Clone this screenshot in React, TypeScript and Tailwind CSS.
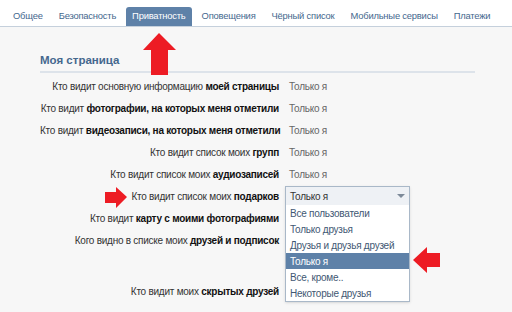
const tabs = ['Общее', 'Безопасность', 'Приватность', 'Оповещения', 'Чёрный список', 'Мобильные сервисы', 'Платежи'];

const rows: { pre: string; bold: string; value?: string; extra?: string }[] = [
  { pre: 'Кто видит основную информацию', bold: 'моей страницы', value: 'Только я' },
  { pre: 'Кто видит', bold: 'фотографии, на которых меня отметили', value: 'Только я' },
  { pre: 'Кто видит', bold: 'видеозаписи, на которых меня отметили', value: 'Только я' },
  { pre: 'Кто видит список моих', bold: 'групп', value: 'Только я' },
  { pre: 'Кто видит список моих', bold: 'аудиозаписей', value: 'Только я' },
  { pre: 'Кто видит список моих', bold: 'подарков' },
  { pre: 'Кто видит', bold: 'карту с моими фотографиями' },
  { pre: 'Кого видно в списке моих', bold: 'друзей и подписок', extra: 'mb-[29px]' },
  { pre: 'Кто видит моих', bold: 'скрытых друзей' },
];

const options = ['Все пользователи', 'Только друзья', 'Друзья и друзья друзей', 'Только я', 'Все, кроме..', 'Некоторые друзья'];

function RedArrow({ dir, className }: { dir: 'up' | 'right' | 'left'; className: string }) {
  const pts =
    dir === 'up'
      ? '16,0 33,17 25,17 25,42 8,42 8,17 0,17'
      : dir === 'right'
        ? '22,10 11,0 11,5 0,5 0,16 11,16 11,21'
        : '0,13 14,0 14,6 27,6 27,20 14,20 14,26';
  const [w, h] = dir === 'up' ? [33, 42] : dir === 'right' ? [22, 21] : [27, 26];
  return (
    <svg width={w} height={h} viewBox={`0 0 ${w} ${h}`} className={className}>
      <polygon points={pts} fill="#ed1c24" />
    </svg>
  );
}

export default function App() {
  return (
    <div className="relative w-[512px] h-[312px] overflow-hidden bg-[#f7f7f7] text-[10px] tracking-[-0.25px] font-['Liberation_Sans',Arial,sans-serif] whitespace-nowrap">
      {/* Tabs */}
      <div className="flex items-end h-[27px] bg-white border-b border-[#c5d0dc] pl-[5px] text-[9.4px] tracking-[-0.2px]">
        {tabs.map((t) => {
          const active = t === 'Приватность';
          return (
            <div
              key={t}
              className={`h-[19px] px-[6px] mx-[2px] flex items-center rounded-t-[3px] ${
                active ? 'bg-[#5e81a8] text-white' : 'text-[#45688e]'
              }`}
            >
              {t}
            </div>
          );
        })}
      </div>

      {/* Content */}
      <div className="px-[40px] pt-[25px]">
        <div className="text-[11.5px] tracking-normal font-bold text-[#45688e] pb-[2px] border-b-2 border-[#dde3ea] w-[435px]">
          Моя страница
        </div>

        <div className="flex flex-col gap-[8px] mt-[6px]">
          {rows.map((r, i) => (
            <div key={i} className={`flex items-center h-[14px] ${r.extra ?? ''}`}>
              <div className="w-[239px] text-right text-[#333]">
                {r.pre} <b className="text-[#111]">{r.bold}</b>
              </div>
              <div className="ml-[10px] text-[#666] relative">
                {r.value}
                {i === 5 && (
                  <div className="absolute left-[-4px] top-[-10px] w-[125px] bg-white border border-[#a9b8c8] shadow-sm text-[#333]">
                    <div className="h-[18px] flex items-center justify-between px-[4px] bg-[#eef1f5]">
                      <span>Только я</span>
                      <svg width="8" height="4" viewBox="0 0 8 4">
                        <polygon points="0,0 8,0 4,4" fill="#7d8a99" />
                      </svg>
                    </div>
                    {options.map((o) => (
                      <div
                        key={o}
                        className={`h-[16px] flex items-center px-[4px] ${
                          o === 'Только я' ? 'bg-[#5e81a8] text-white' : 'text-[#3f5873]'
                        }`}
                      >
                        {o}
                      </div>
                    ))}
                  </div>
                )}
              </div>
            </div>
          ))}
        </div>
      </div>

      <RedArrow dir="up" className="absolute left-[143px] top-[33px]" />
      <RedArrow dir="right" className="absolute left-[105px] top-[187px]" />
      <RedArrow dir="left" className="absolute left-[413px] top-[247px]" />
    </div>
  );
}
